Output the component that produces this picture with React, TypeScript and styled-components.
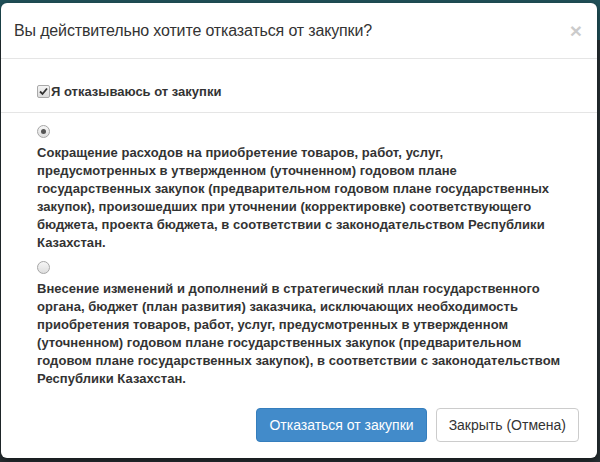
import styled, { createGlobalStyle } from "styled-components";

const GlobalStyle = createGlobalStyle`
  html, body {
    margin: 0;
    padding: 0;
  }
  body {
    font-family: "Liberation Sans", Arial, sans-serif;
    color: #333;
  }
`;

const Page = styled.div`
  position: relative;
  width: 600px;
  height: 462px;
  overflow: hidden;
  background: #283034;
`;

const NavBar = styled.div`
  height: 40px;
  background: #21525a;
`;

const Modal = styled.div`
  position: absolute;
  left: 1px;
  top: 3px;
  width: 596px;
  height: 455px;
  background: #fff;
  border-radius: 6px;
  box-shadow: 0 3px 9px rgba(0, 0, 0, 0.5);
  display: flex;
  flex-direction: column;
`;

const Header = styled.div`
  display: flex;
  align-items: center;
  justify-content: space-between;
  height: 55px;
  padding: 0 15px 0 13px;
  border-bottom: 1px solid #e5e5e5;
`;

const Title = styled.h4`
  margin: 0;
  font-size: 16px;
  letter-spacing: -0.15px;
  font-weight: normal;
  line-height: 24px;
  color: #333;
`;

const Close = styled.button`
  border: 0;
  background: none;
  padding: 0;
  font-family: "Liberation Sans", Arial, sans-serif;
  font-size: 21px;
  font-weight: bold;
  line-height: 1;
  color: #000;
  opacity: 0.2;
`;

const Section = styled.div<{ $divider?: boolean }>`
  padding: ${(p) => (p.$divider ? "22px 15px 11px 36px" : "12px 15px 0 36px")};
  border-bottom: ${(p) => (p.$divider ? "1px solid #e5e5e5" : "none")};
`;

const CheckRow = styled.label`
  display: flex;
  align-items: center;
  height: 20px;
  font-size: 13px;
  font-weight: bold;
  color: #333;
`;

const CheckBox = styled.span`
  width: 11px;
  height: 11px;
  border: 1px solid #a9a9a9;
  border-radius: 2px;
  background: linear-gradient(#f4f4f4, #dcdcdc);
  display: flex;
  align-items: center;
  justify-content: center;
  margin-right: 1px;
  flex-shrink: 0;
`;

const Option = styled.div`
  display: flex;
  flex-direction: column;
  & + & {
    margin-top: 9px;
  }
`;

const Radio = styled.span<{ $checked?: boolean }>`
  width: 11px;
  height: 11px;
  border-radius: 50%;
  border: 1px solid #a6a6a6;
  background: linear-gradient(#f6f6f6, #dedede);
  display: flex;
  align-items: center;
  justify-content: center;
  margin-bottom: 6px;
  &::after {
    content: "";
    display: ${(p) => (p.$checked ? "block" : "none")};
    width: 5px;
    height: 5px;
    border-radius: 50%;
    background: #555;
  }
`;

const OptionText = styled.div`
  font-size: 13px;
  font-weight: bold;
  line-height: 18px;
  letter-spacing: 0.05px;
  color: #333;
  white-space: nowrap;
`;

const Line = styled.span`
  display: block;
`;

const Footer = styled.div`
  display: flex;
  justify-content: flex-end;
  gap: 9px;
  padding: 20px 18px 0 0;
`;

const Btn = styled.button<{ $primary?: boolean }>`
  height: 34px;
  padding: 0 12px;
  border-radius: 4px;
  font-family: "Liberation Sans", Arial, sans-serif;
  font-size: 14px;
  line-height: 20px;
  border: 1px solid ${(p) => (p.$primary ? "#357ebd" : "#ccc")};
  background: ${(p) => (p.$primary ? "#428bca" : "#fff")};
  color: ${(p) => (p.$primary ? "#fff" : "#333")};
`;

const reasons = [
  {
    checked: true,
    lines: [
      "Сокращение расходов на приобретение товаров, работ, услуг,",
      "предусмотренных в утвержденном (уточненном) годовом плане",
      "государственных закупок (предварительном годовом плане государственных",
      "закупок), произошедших при уточнении (корректировке) соответствующего",
      "бюджета, проекта бюджета, в соответствии с законодательством Республики",
      "Казахстан.",
    ],
  },
  {
    checked: false,
    lines: [
      "Внесение изменений и дополнений в стратегический план государственного",
      "органа, бюджет (план развития) заказчика, исключающих необходимость",
      "приобретения товаров, работ, услуг, предусмотренных в утвержденном",
      "(уточненном) годовом плане государственных закупок (предварительном",
      "годовом плане государственных закупок), в соответствии с законодательством",
      "Республики Казахстан.",
    ],
  },
];

export default function App() {
  return (
    <Page>
      <GlobalStyle />
      <NavBar />
      <Modal>
        <Header>
          <Title>Вы действительно хотите отказаться от закупки?</Title>
          <Close>×</Close>
        </Header>
        <Section $divider>
          <CheckRow>
            <CheckBox>
              <svg width="9" height="9" viewBox="0 0 9 9">
                <path d="M1 4.5 L3.5 7 L8 1.5" stroke="#333" strokeWidth="1.8" fill="none" />
              </svg>
            </CheckBox>
            Я отказываюсь от закупки
          </CheckRow>
        </Section>
        <Section>
          {reasons.map((r, i) => (
            <Option key={i}>
              <Radio $checked={r.checked} />
              <OptionText>
                {r.lines.map((l) => (
                  <Line key={l}>{l}</Line>
                ))}
              </OptionText>
            </Option>
          ))}
        </Section>
        <Footer>
          <Btn $primary>Отказаться от закупки</Btn>
          <Btn>Закрыть (Отмена)</Btn>
        </Footer>
      </Modal>
    </Page>
  );
}
